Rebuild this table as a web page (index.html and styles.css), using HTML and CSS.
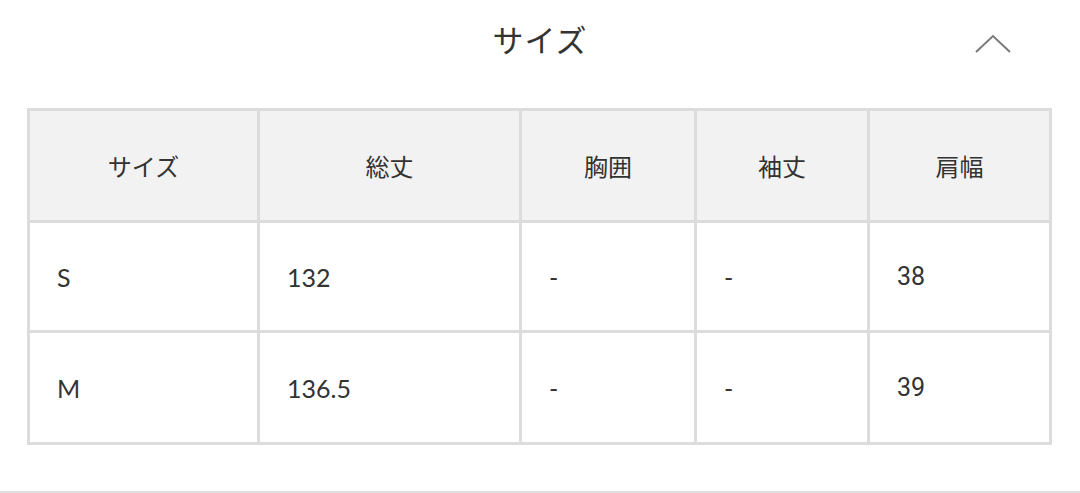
FILE: index.html
```html
<!DOCTYPE html>
<html lang="ja">
<head>
<meta charset="utf-8">
<link rel="stylesheet" href="styles.css">
</head>
<body>
<div class="page">
  <div class="head">
    <div class="title">サイズ</div>
    <svg class="chev" width="36" height="20" viewBox="0 0 36 20"><polyline points="1,18 18,2 35,18" fill="none" stroke="#7a7a7a" stroke-width="2"/></svg>
  </div>
  <div class="grid">
    <div class="th">サイズ</div><div class="th">総丈</div><div class="th">胸囲</div><div class="th">袖丈</div><div class="th">肩幅</div>
    <div class="td">S</div><div class="td">132</div><div class="td">-</div><div class="td">-</div><div class="td alt">38</div>
    <div class="td">M</div><div class="td">136.5</div><div class="td">-</div><div class="td">-</div><div class="td alt">39</div>
  </div>
  <div class="spacer"></div>
  <div class="rule"></div>
</div>
</body>
</html>
```
FILE: styles.css
```css
html, body { margin: 0; padding: 0; background: #fff; }
body { font-family: Lato, "Noto Sans CJK JP", sans-serif; color: #333; }
.page { width: 1080px; height: 493px; display: flex; flex-direction: column; }
.head { height: 108px; position: relative; display: flex; justify-content: center; }
.title { font-family: "Noto Sans CJK JP", sans-serif; font-size: 31px; line-height: 40px; padding-top: 19px; color: #333; letter-spacing: 1px; }
.chev { position: absolute; left: 975px; top: 34px; }
.grid {
  margin-left: 27px; width: 1019px;
  display: grid;
  grid-template-columns: 227px 259px 172px 170px 179px;
  grid-template-rows: 109px 107px 109px;
  gap: 3px; padding: 3px; background: #dcdcdc;
}
.th { background: #f2f2f2; display: flex; align-items: center; justify-content: center; font-family: "Noto Sans CJK JP", sans-serif; font-size: 24px; color: #333; }
.td { background: #fff; display: flex; align-items: center; padding-left: 27px; font-size: 25px; color: #333; }
.td.alt { font-family: Roboto, sans-serif; font-size: 25px; }
.spacer { flex: 1; }
.rule { height: 2px; background: #dedede; }
```
